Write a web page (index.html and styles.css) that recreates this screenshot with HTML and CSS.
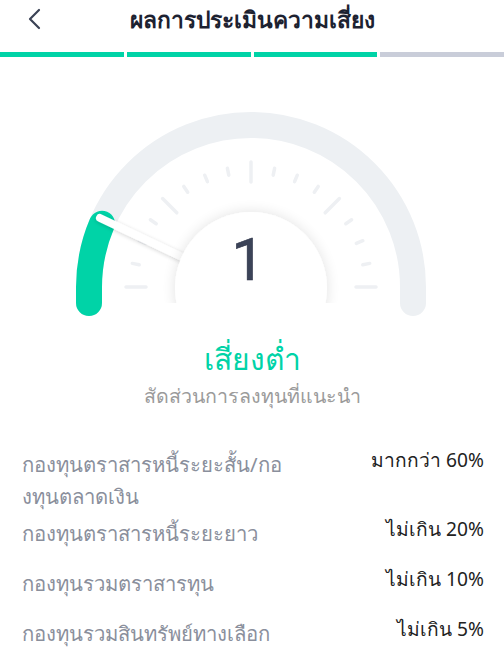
FILE: index.html
```html
<!DOCTYPE html>
<html lang="th">
<head>
<meta charset="utf-8">
<link rel="stylesheet" href="styles.css">
</head>
<body>
<div class="page">
  <header class="header">
    <svg class="back" width="20" height="24" viewBox="0 0 20 24"><polyline points="13,3 4,12 13,21" fill="none" stroke="#3b4255" stroke-width="2.2" stroke-linecap="round" stroke-linejoin="round"/></svg>
    <h1 class="title">ผลการประเมินความเสี่ยง</h1>
  </header>
  <div class="steps">
    <span class="step on"></span><span class="step on"></span><span class="step on"></span><span class="step"></span>
  </div>
  <svg class="gauge" width="504" height="222" viewBox="0 100 504 222">
    <defs>
      <filter id="glow" x="-50%" y="-50%" width="200%" height="200%">
        <feGaussianBlur in="SourceAlpha" stdDeviation="7"/>
        <feComponentTransfer><feFuncA type="linear" slope="0.12"/></feComponentTransfer>
        <feMerge><feMergeNode/><feMergeNode in="SourceGraphic"/></feMerge>
      </filter>
      <filter id="nshadow" x="-50%" y="-50%" width="200%" height="200%">
        <feGaussianBlur in="SourceAlpha" stdDeviation="2"/>
        <feOffset dx="0" dy="1"/>
        <feComponentTransfer><feFuncA type="linear" slope="0.18"/></feComponentTransfer>
        <feMerge><feMergeNode/><feMergeNode in="SourceGraphic"/></feMerge>
      </filter>
      <clipPath id="cut"><rect x="0" y="100" width="504" height="203"/></clipPath>
    </defs>
    <path d="M89,303 L89,287 A162,162 0 0 1 413,287 L413,303" fill="none" stroke="#edf0f3" stroke-width="26" stroke-linecap="round"/>
    <path d="M89,303 L89,287 A162,162 0 0 1 102,223.7" fill="none" stroke="#00d3a7" stroke-width="26" stroke-linecap="round"/>
    <g id="ticks" stroke="#eef0f3" stroke-width="3.5" stroke-linecap="round"></g>
    <line x1="100" y1="218" x2="182" y2="257" stroke="#ffffff" stroke-width="8" stroke-linecap="round" filter="url(#nshadow)"/>
    <g clip-path="url(#cut)">
      <circle cx="251" cy="288" r="76" fill="#ffffff" filter="url(#glow)"/>
    </g>
    <text x="248" y="280" text-anchor="middle" class="score">1</text>
  </svg>
  <div class="level">เสี่ยงต่ำ</div>
  <div class="sub">สัดส่วนการลงทุนที่แนะนำ</div>
  <ul class="alloc">
    <li class="row"><span class="label">กองทุนตราสารหนี้ระยะสั้น/กองทุนตลาดเงิน</span><span class="value">มากกว่า 60%</span></li>
    <li class="row"><span class="label">กองทุนตราสารหนี้ระยะยาว</span><span class="value">ไม่เกิน 20%</span></li>
    <li class="row"><span class="label">กองทุนรวมตราสารทุน</span><span class="value">ไม่เกิน 10%</span></li>
    <li class="row"><span class="label">กองทุนรวมสินทรัพย์ทางเลือก</span><span class="value">ไม่เกิน 5%</span></li>
  </ul>
</div>
<script src="gauge.js"></script>
</body>
</html>
```

FILE: gauge.js
```js
(function () {
  var g = document.getElementById('ticks');
  var cx = 251, cy = 287;
  for (var i = 0; i <= 16; i++) {
    var a = Math.PI - i * Math.PI / 16;
    var long = i % 4 === 0;
    var r1 = long ? 105 : 114;
    var r2 = long ? 125 : 121;
    var l = document.createElementNS('http://www.w3.org/2000/svg', 'line');
    l.setAttribute('x1', (cx + r1 * Math.cos(a)).toFixed(1));
    l.setAttribute('y1', (cy - r1 * Math.sin(a)).toFixed(1));
    l.setAttribute('x2', (cx + r2 * Math.cos(a)).toFixed(1));
    l.setAttribute('y2', (cy - r2 * Math.sin(a)).toFixed(1));
    g.appendChild(l);
  }
})();
```

FILE: styles.css
```css
html, body { margin: 0; padding: 0; background: #ffffff; }
body { font-family: "Noto Sans", "Liberation Sans", sans-serif; width: 504px; height: 656px; overflow: hidden; }
.page { width: 504px; }
.header { position: relative; height: 40px; display: flex; align-items: center; justify-content: center; }
.back { position: absolute; left: 26px; top: 7px; }
.title { margin: 0; font-size: 22.8px; font-weight: 700; color: #1d2231; line-height: 40px; }
.steps { display: flex; gap: 3px; margin-top: 12px; height: 5px; }
.step { flex: 1; background: #c9cdd9; }
.step.on { background: #00d3a7; }
.gauge { display: block; margin-top: 43px; }
.score { font-family: Roboto, "Liberation Sans", sans-serif; font-size: 59px; fill: #3b4358; stroke: #2b3246; stroke-width: 0.6; }
.level { text-align: center; color: #00d3a7; font-size: 30px; line-height: 38px; margin-top: 18px; }
.sub { text-align: center; color: #9b9b9b; font-size: 19.6px; line-height: 28px; margin-top: 4px; }
.alloc { list-style: none; margin: 38px 0 0; padding: 0 20px 0 22px; }
.row { display: flex; justify-content: space-between; align-items: flex-start; min-height: 45px; margin-bottom: 5px; }
.label { color: #8a8f9c; font-size: 20.3px; line-height: 32px; width: 262px; word-break: break-all; }
.value { color: #222222; font-size: 19.2px; line-height: 24px; margin-top: 0; text-align: right; }
```
